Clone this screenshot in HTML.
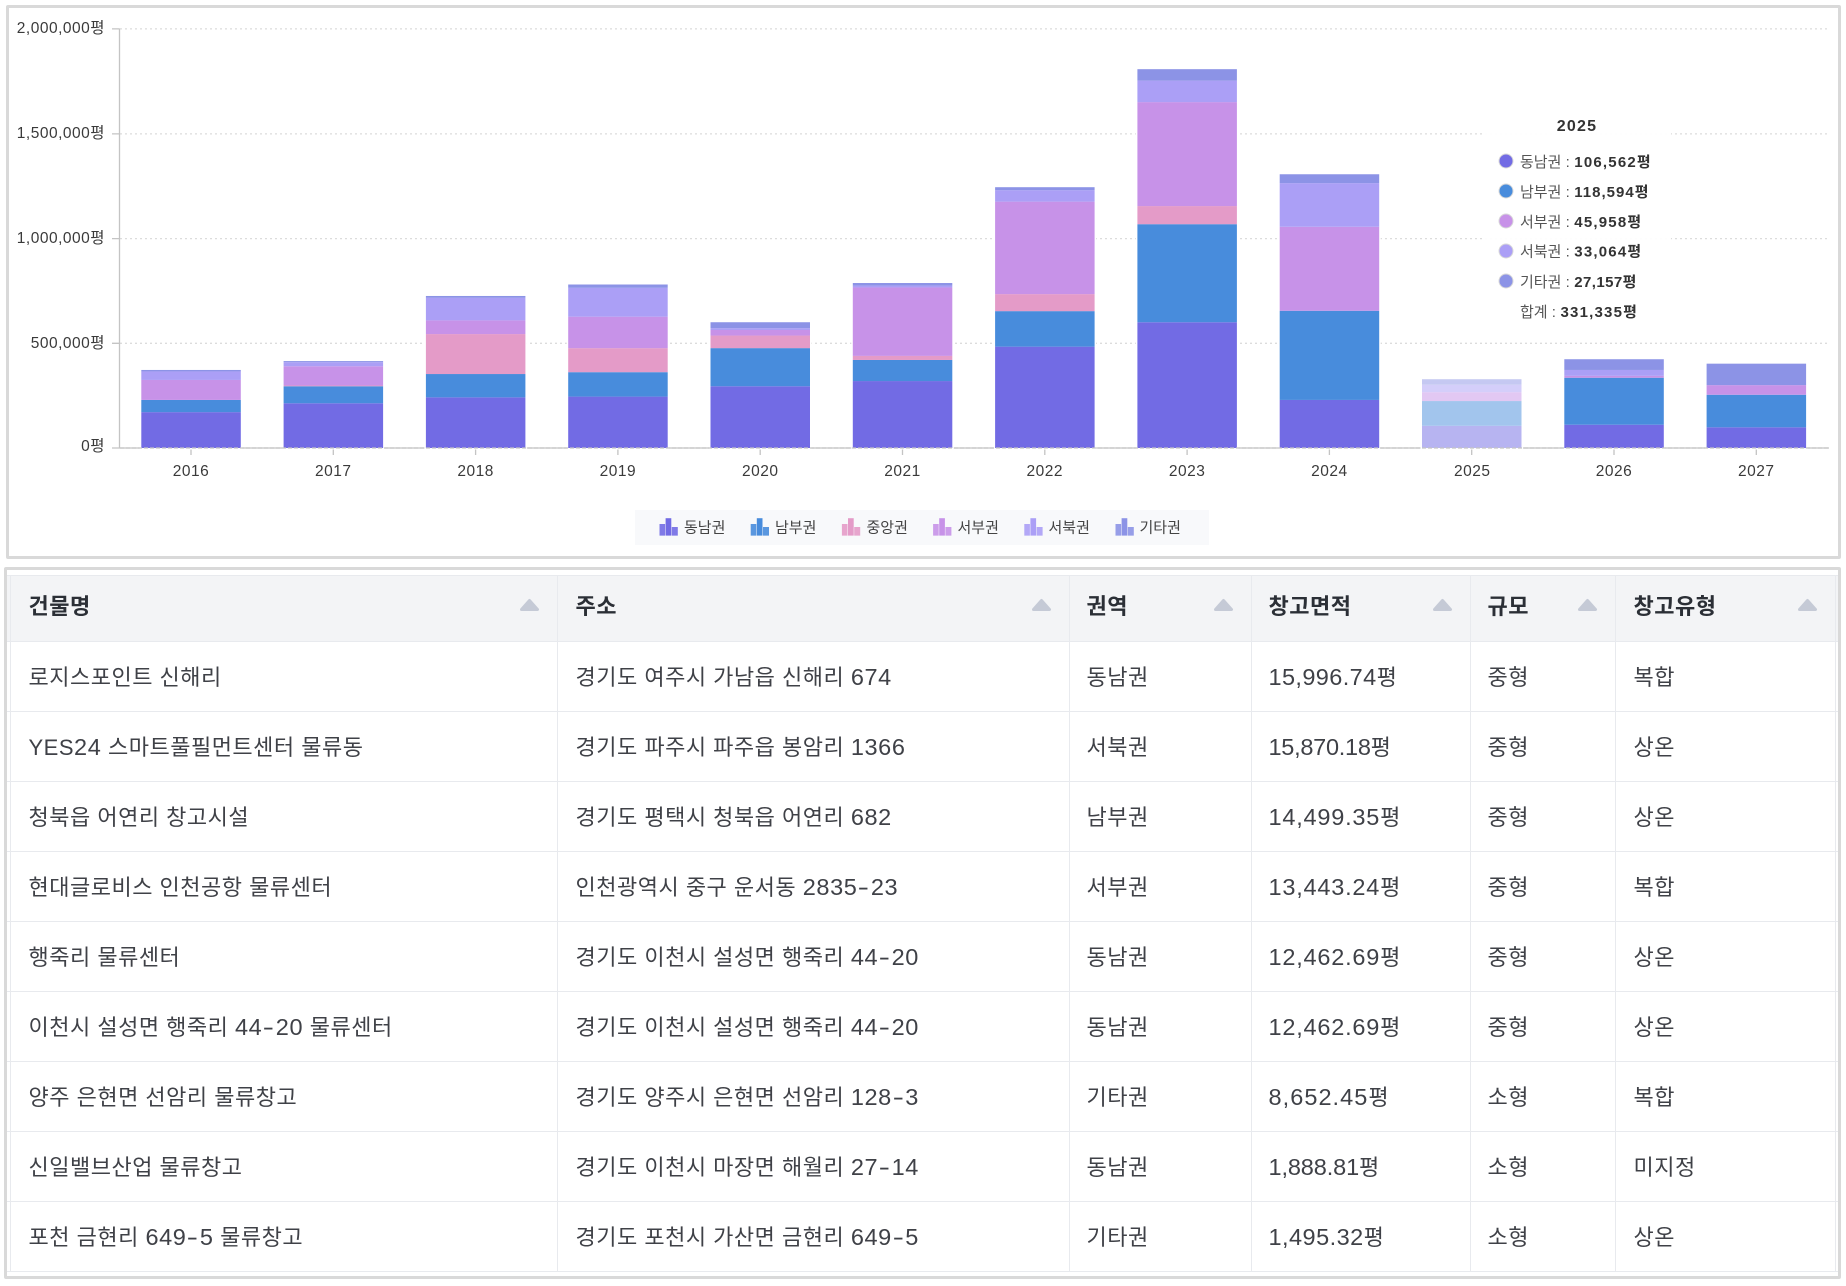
<!DOCTYPE html>
<html lang="ko"><head><meta charset="utf-8"><title>물류창고</title>
<style>
*{box-sizing:border-box}
html,body{margin:0;padding:0;background:#fff;width:1846px;height:1286px;overflow:hidden}
body{position:relative;font-family:"Liberation Sans","Noto Sans CJK KR",sans-serif;color:#333}
.box{position:absolute;border:3px solid #d9d9d9;border-radius:2px;background:#fff}
#c{left:6px;top:5px;width:1835px;height:554px}
#t{left:4px;top:567px;width:1837px;height:712px}
svg.chart{position:absolute;left:0;top:0}
svg text{font-family:"Liberation Sans","Noto Sans CJK KR",sans-serif}
.ax{font-size:15.5px;fill:#3a3a3a;letter-spacing:.5px}
.tt{font-size:15px;fill:#555}
.tb{font-weight:700;fill:#333;letter-spacing:1.2px}
.lg{font-size:15px;fill:#444}
table{position:absolute;left:0;top:5px;width:1831px;border-collapse:collapse;table-layout:fixed;font-size:22px;letter-spacing:.5px}
th,td{padding:0 0 2px 18px;text-align:left;border:1px solid #e8eaee;border-top:0;white-space:nowrap;overflow:hidden}
th{height:66px;padding-bottom:7px;background:#f3f4f6;font-weight:700;color:#2b2f36;position:relative;border-top:1px solid #e8eaee}
td{height:70px;color:#3f4147}
tr>:nth-child(4),tr>:nth-child(5),tr>:nth-child(6){padding-left:17px}
.e{padding:0;border-left:0;border-right:0}
u{text-decoration:none;font-size:23.5px;letter-spacing:.6px}
em{font-style:normal;padding:0 2.5px;display:inline-block;transform:scaleX(1.45)}
th svg{position:absolute;right:17px;top:22px;width:21px;height:14px}
</style></head><body>
<svg class="chart" width="1846" height="560" viewBox="0 0 1846 560">
<g stroke="#dcdcdc" stroke-width="1.3" stroke-dasharray="2 3" fill="none">
<path d="M120 28.9H1827M120 133.9H1827M120 238.6H1827M120 343.3H1827"/>
</g>
<path d="M119.5 28.5V448M112 28.9H119.5M112 133.9H119.5M112 238.6H119.5M112 343.3H119.5M112 448H1829M191 448V455M333.3 448V455M475.6 448V455M617.9 448V455M760.2 448V455M902.5 448V455M1044.8 448V455M1187.1 448V455M1329.4 448V455M1471.7 448V455M1614 448V455M1756.3 448V455" stroke="#c4c4c4" stroke-width="1.3" fill="none"/>
<g fill="#fff" stroke="#fff" stroke-width="3">
<rect x="141.3" y="370" width="99.5" height="78"/><rect x="283.6" y="361" width="99.5" height="87"/><rect x="425.9" y="296" width="99.5" height="152"/><rect x="568.2" y="284.5" width="99.5" height="163.5"/><rect x="710.5" y="322" width="99.5" height="126"/><rect x="852.8" y="283" width="99.5" height="165"/><rect x="995.1" y="187" width="99.5" height="261"/><rect x="1137.4" y="69" width="99.5" height="379"/><rect x="1279.7" y="174" width="99.5" height="274"/><rect x="1422" y="379" width="99.5" height="69"/><rect x="1564.3" y="359" width="99.5" height="89"/><rect x="1706.6" y="363.7" width="99.5" height="84.3"/>
</g>
<g transform="scale(1,.36996)">
<!-- 2016 -->
<rect x="141.3" y="1114" width="99.5" height="97" fill="#726be4"/><rect x="141.3" y="1081" width="99.5" height="33" fill="#488cdc"/><rect x="141.3" y="1027" width="99.5" height="54" fill="#c792e8"/><rect x="141.3" y="1004" width="99.5" height="23" fill="#ab9ff6"/><rect x="141.3" y="1000" width="99.5" height="4" fill="#8c93e6"/>
<!-- 2017 -->
<rect x="283.6" y="1090" width="99.5" height="121" fill="#726be4"/><rect x="283.6" y="1044" width="99.5" height="46" fill="#488cdc"/><rect x="283.6" y="1042" width="99.5" height="2" fill="#e49bc8"/><rect x="283.6" y="990" width="99.5" height="52" fill="#c792e8"/><rect x="283.6" y="979" width="99.5" height="11" fill="#ab9ff6"/><rect x="283.6" y="976" width="99.5" height="3" fill="#8c93e6"/>
<!-- 2018 -->
<rect x="425.9" y="1074" width="99.5" height="137" fill="#726be4"/><rect x="425.9" y="1011" width="99.5" height="63" fill="#488cdc"/><rect x="425.9" y="903" width="99.5" height="108" fill="#e49bc8"/><rect x="425.9" y="866" width="99.5" height="37" fill="#c792e8"/><rect x="425.9" y="805" width="99.5" height="61" fill="#ab9ff6"/><rect x="425.9" y="800" width="99.5" height="5" fill="#8c93e6"/>
<!-- 2019 -->
<rect x="568.2" y="1072" width="99.5" height="139" fill="#726be4"/><rect x="568.2" y="1006" width="99.5" height="66" fill="#488cdc"/><rect x="568.2" y="941" width="99.5" height="65" fill="#e49bc8"/><rect x="568.2" y="856" width="99.5" height="85" fill="#c792e8"/><rect x="568.2" y="778" width="99.5" height="78" fill="#ab9ff6"/><rect x="568.2" y="769" width="99.5" height="9" fill="#8c93e6"/>
<!-- 2020 -->
<rect x="710.5" y="1044" width="99.5" height="167" fill="#726be4"/><rect x="710.5" y="941" width="99.5" height="103" fill="#488cdc"/><rect x="710.5" y="907" width="99.5" height="34" fill="#e49bc8"/><rect x="710.5" y="892" width="99.5" height="15" fill="#c792e8"/><rect x="710.5" y="887" width="99.5" height="5" fill="#ab9ff6"/><rect x="710.5" y="871" width="99.5" height="16" fill="#8c93e6"/>
<!-- 2021 -->
<rect x="852.8" y="1030" width="99.5" height="181" fill="#726be4"/><rect x="852.8" y="973" width="99.5" height="57" fill="#488cdc"/><rect x="852.8" y="962" width="99.5" height="11" fill="#e49bc8"/><rect x="852.8" y="777" width="99.5" height="185" fill="#c792e8"/><rect x="852.8" y="772" width="99.5" height="5" fill="#ab9ff6"/><rect x="852.8" y="765" width="99.5" height="7" fill="#8c93e6"/>
<!-- 2022 -->
<rect x="995.1" y="937" width="99.5" height="274" fill="#726be4"/><rect x="995.1" y="841" width="99.5" height="96" fill="#488cdc"/><rect x="995.1" y="795" width="99.5" height="46" fill="#e49bc8"/><rect x="995.1" y="545" width="99.5" height="250" fill="#c792e8"/><rect x="995.1" y="514" width="99.5" height="31" fill="#ab9ff6"/><rect x="995.1" y="506" width="99.5" height="8" fill="#8c93e6"/>
<!-- 2023 -->
<rect x="1137.4" y="871" width="99.5" height="340" fill="#726be4"/><rect x="1137.4" y="606" width="99.5" height="265" fill="#488cdc"/><rect x="1137.4" y="557" width="99.5" height="49" fill="#e49bc8"/><rect x="1137.4" y="276" width="99.5" height="281" fill="#c792e8"/><rect x="1137.4" y="218" width="99.5" height="58" fill="#ab9ff6"/><rect x="1137.4" y="187" width="99.5" height="31" fill="#8c93e6"/>
<!-- 2024 -->
<rect x="1279.7" y="1081" width="99.5" height="130" fill="#726be4"/><rect x="1279.7" y="840" width="99.5" height="241" fill="#488cdc"/><rect x="1279.7" y="613" width="99.5" height="227" fill="#c792e8"/><rect x="1279.7" y="495" width="99.5" height="118" fill="#ab9ff6"/><rect x="1279.7" y="471" width="99.5" height="24" fill="#8c93e6"/>
<!-- 2025 -->
<g opacity=".5"><rect x="1422" y="1151" width="99.5" height="60" fill="#726be4"/><rect x="1422" y="1084" width="99.5" height="67" fill="#488cdc"/><rect x="1422" y="1060" width="99.5" height="24" fill="#c792e8"/><rect x="1422" y="1040" width="99.5" height="20" fill="#ab9ff6"/><rect x="1422" y="1025" width="99.5" height="15" fill="#8c93e6"/></g>
<!-- 2026 -->
<rect x="1564.3" y="1148" width="99.5" height="63" fill="#726be4"/><rect x="1564.3" y="1021" width="99.5" height="127" fill="#488cdc"/><rect x="1564.3" y="1016" width="99.5" height="5" fill="#c792e8"/><rect x="1564.3" y="1000" width="99.5" height="16" fill="#ab9ff6"/><rect x="1564.3" y="971" width="99.5" height="29" fill="#8c93e6"/>
<!-- 2027 -->
<rect x="1706.6" y="1155" width="99.5" height="56" fill="#726be4"/><rect x="1706.6" y="1067" width="99.5" height="88" fill="#488cdc"/><rect x="1706.6" y="1041" width="99.5" height="26" fill="#c792e8"/><rect x="1706.6" y="983" width="99.5" height="58" fill="#8c93e6"/>
</g>
<path d="M120 448H1829" stroke="#c4c4c4" stroke-width="1.2" stroke-dasharray="4 2" fill="none"/>
<g text-anchor="end">
<text class="ax" x="105" y="33">2,000,000평</text>
<text class="ax" x="105" y="138">1,500,000평</text>
<text class="ax" x="105" y="243">1,000,000평</text>
<text class="ax" x="105" y="348">500,000평</text>
<text class="ax" x="105" y="451">0평</text>
</g>
<g text-anchor="middle">
<text class="ax" x="191" y="476">2016</text><text class="ax" x="333.3" y="476">2017</text><text class="ax" x="475.6" y="476">2018</text><text class="ax" x="617.9" y="476">2019</text><text class="ax" x="760.2" y="476">2020</text><text class="ax" x="902.5" y="476">2021</text><text class="ax" x="1044.8" y="476">2022</text><text class="ax" x="1187.1" y="476">2023</text><text class="ax" x="1329.4" y="476">2024</text><text class="ax" x="1472.2" y="476">2025</text><text class="ax" x="1614" y="476">2026</text><text class="ax" x="1756.3" y="476">2027</text>
</g>
<!-- tooltip -->
<rect x="1483" y="105" width="188" height="225" fill="#fff" fill-opacity=".92"/>
<text class="tb" x="1577" y="131" font-size="16" text-anchor="middle">2025</text>
<g stroke="#d8d8d8" stroke-width="1">
<circle cx="1506" cy="161" r="7" fill="#726be4"/><circle cx="1506" cy="191" r="7" fill="#488cdc"/><circle cx="1506" cy="221" r="7" fill="#c792e8"/><circle cx="1506" cy="251" r="7" fill="#ab9ff6"/><circle cx="1506" cy="281" r="7" fill="#8c93e6"/>
</g>
<text class="tt" x="1520" y="167">동남권 :<tspan class="tb" x="1574.3">106,562평</tspan></text>
<text class="tt" x="1520" y="197">남부권 :<tspan class="tb" x="1574.3" style="letter-spacing:1px">118,594평</tspan></text>
<text class="tt" x="1520" y="227">서부권 :<tspan class="tb" x="1574.3">45,958평</tspan></text>
<text class="tt" x="1520" y="256.5">서북권 :<tspan class="tb" x="1574.3">33,064평</tspan></text>
<text class="tt" x="1520" y="287">기타권 :<tspan class="tb" x="1574.3" style="letter-spacing:.4px">27,157평</tspan></text>
<text class="tt" x="1520" y="317">합계 :<tspan class="tb" x="1560.5">331,335평</tspan></text>
<!-- legend -->
<rect x="635" y="510" width="574" height="35" fill="#f8f9fb"/>
<g>
<path fill="#726be4" d="M659.5 524h5.6v11.6h-5.6zM671.8 527h6v8.6h-6z" opacity=".9"/><path fill="#726be4" d="M665.6 518.2h5.7v17.4h-5.7z"/>
<path fill="#488cdc" d="M750.7 524h5.6v11.6h-5.6zM763 527h6v8.6h-6z" opacity=".9"/><path fill="#488cdc" d="M756.8 518.2h5.7v17.4h-5.7z"/>
<path fill="#e49bc8" d="M841.9 524h5.6v11.6h-5.6zM854.2 527h6v8.6h-6z" opacity=".9"/><path fill="#e49bc8" d="M848 518.2h5.7v17.4h-5.7z"/>
<path fill="#c792e8" d="M933.1 524h5.6v11.6h-5.6zM945.4 527h6v8.6h-6z" opacity=".9"/><path fill="#c792e8" d="M939.2 518.2h5.7v17.4h-5.7z"/>
<path fill="#ab9ff6" d="M1024.3 524h5.6v11.6h-5.6zM1036.6 527h6v8.6h-6z" opacity=".9"/><path fill="#ab9ff6" d="M1030.4 518.2h5.7v17.4h-5.7z"/>
<path fill="#8c93e6" d="M1115.5 524h5.6v11.6h-5.6zM1127.8 527h6v8.6h-6z" opacity=".9"/><path fill="#8c93e6" d="M1121.6 518.2h5.7v17.4h-5.7z"/>
</g>
<text class="lg" x="684" y="532.5">동남권</text><text class="lg" x="775" y="532.5">남부권</text><text class="lg" x="866.5" y="532.5">중앙권</text><text class="lg" x="957.5" y="532.5">서부권</text><text class="lg" x="1048.5" y="532.5">서북권</text><text class="lg" x="1139.5" y="532.5">기타권</text>
</svg>
<div class="box" id="c" style="background:none"></div>
<div class="box" id="t">
<table>
<colgroup><col style="width:3px"><col style="width:547px"><col style="width:512px"><col style="width:182px"><col style="width:219px"><col style="width:145px"><col style="width:220px"><col></colgroup>
<thead><tr><th class="e"></th>
<th>건물명<svg viewBox="0 0 21 14"><path d="M10.5 2.5 18.5 11.5H2.5Z" fill="#c5cad6" stroke="#c5cad6" stroke-width="3" stroke-linejoin="round"/></svg></th>
<th>주소<svg viewBox="0 0 21 14"><path d="M10.5 2.5 18.5 11.5H2.5Z" fill="#c5cad6" stroke="#c5cad6" stroke-width="3" stroke-linejoin="round"/></svg></th>
<th>권역<svg viewBox="0 0 21 14"><path d="M10.5 2.5 18.5 11.5H2.5Z" fill="#c5cad6" stroke="#c5cad6" stroke-width="3" stroke-linejoin="round"/></svg></th>
<th>창고면적<svg viewBox="0 0 21 14"><path d="M10.5 2.5 18.5 11.5H2.5Z" fill="#c5cad6" stroke="#c5cad6" stroke-width="3" stroke-linejoin="round"/></svg></th>
<th>규모<svg viewBox="0 0 21 14"><path d="M10.5 2.5 18.5 11.5H2.5Z" fill="#c5cad6" stroke="#c5cad6" stroke-width="3" stroke-linejoin="round"/></svg></th>
<th>창고유형<svg viewBox="0 0 21 14"><path d="M10.5 2.5 18.5 11.5H2.5Z" fill="#c5cad6" stroke="#c5cad6" stroke-width="3" stroke-linejoin="round"/></svg></th>
<th class="e"></th></tr></thead>
<tbody>
<tr><td class="e"></td><td>로지스포인트 신해리</td><td>경기도 여주시 가남읍 신해리 <u>674</u></td><td>동남권</td><td><u style="letter-spacing:.39px">15,996.74</u>평</td><td>중형</td><td>복합</td><td class="e"></td></tr>
<tr><td class="e"></td><td>YES<u>24</u> 스마트풀필먼트센터 물류동</td><td>경기도 파주시 파주읍 봉암리 <u>1366</u></td><td>서북권</td><td><u style="letter-spacing:-.27px">15,870.18</u>평</td><td>중형</td><td>상온</td><td class="e"></td></tr>
<tr><td class="e"></td><td>청북읍 어연리 창고시설</td><td>경기도 평택시 청북읍 어연리 <u>682</u></td><td>남부권</td><td><u style="letter-spacing:.79px">14,499.35</u>평</td><td>중형</td><td>상온</td><td class="e"></td></tr>
<tr><td class="e"></td><td>현대글로비스 인천공항 물류센터</td><td>인천광역시 중구 운서동 <u>2835<em>-</em>23</u></td><td>서부권</td><td><u style="letter-spacing:.79px">13,443.24</u>평</td><td>중형</td><td>복합</td><td class="e"></td></tr>
<tr><td class="e"></td><td>행죽리 물류센터</td><td>경기도 이천시 설성면 행죽리 <u>44<em>-</em>20</u></td><td>동남권</td><td><u style="letter-spacing:.79px">12,462.69</u>평</td><td>중형</td><td>상온</td><td class="e"></td></tr>
<tr><td class="e"></td><td>이천시 설성면 행죽리 <u>44<em>-</em>20</u> 물류센터</td><td>경기도 이천시 설성면 행죽리 <u>44<em>-</em>20</u></td><td>동남권</td><td><u style="letter-spacing:.79px">12,462.69</u>평</td><td>중형</td><td>상온</td><td class="e"></td></tr>
<tr><td class="e"></td><td>양주 은현면 선암리 물류창고</td><td>경기도 양주시 은현면 선암리 <u>128<em>-</em>3</u></td><td>기타권</td><td><u style="letter-spacing:1.05px">8,652.45</u>평</td><td>소형</td><td>복합</td><td class="e"></td></tr>
<tr><td class="e"></td><td>신일밸브산업 물류창고</td><td>경기도 이천시 마장면 해월리 <u>27<em>-</em>14</u></td><td>동남권</td><td><u style="letter-spacing:-.12px">1,888.81</u>평</td><td>소형</td><td>미지정</td><td class="e"></td></tr>
<tr><td class="e"></td><td>포천 금현리 <u>649<em>-</em>5</u> 물류창고</td><td>경기도 포천시 가산면 금현리 <u>649<em>-</em>5</u></td><td>기타권</td><td><u style="letter-spacing:.46px">1,495.32</u>평</td><td>소형</td><td>상온</td><td class="e"></td></tr>
</tbody></table>
</div>
</body></html>
